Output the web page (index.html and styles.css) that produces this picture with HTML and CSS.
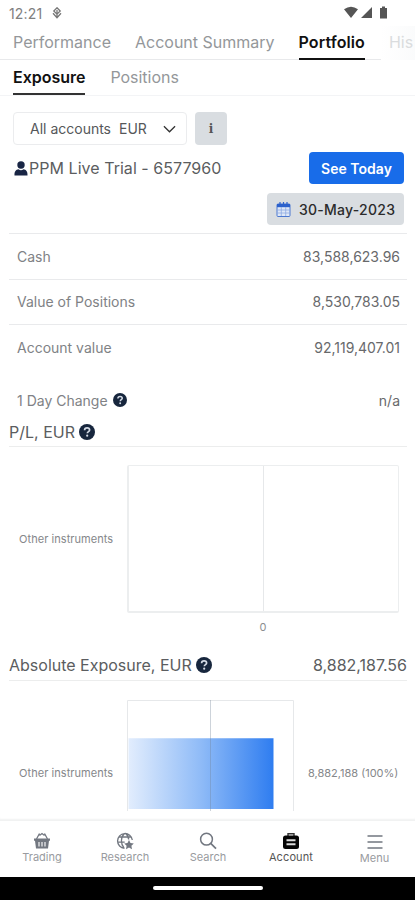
FILE: index.html
```html
<!DOCTYPE html>
<html lang="en">
<head>
<meta charset="utf-8">
<title>Portfolio exposure</title>
<link rel="stylesheet" href="styles.css">
</head>
<body>
<svg class="defs" aria-hidden="true">
  <symbol id="help" viewBox="0 0 16 16"><circle cx="8" cy="8" r="8" fill="#17263d"/><path d="M5.6 6.2C5.6 4.7 6.7 3.9 8.1 3.9s2.5.9 2.5 2.1c0 1.6-2.3 1.7-2.3 3.3" fill="none" stroke="#d5dce6" stroke-width="1.7"/><circle cx="8.2" cy="11.7" r="1.1" fill="#d5dce6"/></symbol>
</svg>
<div class="screen">
  <header class="status">
    <span class="clock">12:21</span>
    <svg class="usb" viewBox="0 0 10 12"><path d="M5 .8 8.2 4 5 7.2 1.8 4zM5 3v8M1 6.2 5 10.8 9 6.2" fill="none" stroke="#777" stroke-width="1.3"/></svg>
    <svg class="signals" viewBox="0 0 44 14"><path d="M0 3.2Q7-1.800 14 3.2L7 12zM17 12 28 1v11z" fill="#555"/><path d="M36 2h2V.5h3V2h2v10.500h-7z" fill="#555"/></svg>
  </header>
  <nav class="tabs primary">
    <a class="t-performance">Performance</a><a class="t-summary">Account Summary</a><a class="t-portfolio active">Portfolio</a><a class="t-history">His</a>
  </nav>
  <nav class="tabs secondary">
    <a class="t-exposure active">Exposure</a><a class="t-positions">Positions</a>
  </nav>
  <main class="content">
    <div class="filters">
      <div class="select"><span class="select-name">All accounts</span><span class="select-currency">EUR</span><svg class="chevron" viewBox="0 0 14 8"><path d="M1 1l6 6 6-6" fill="none" stroke="#333" stroke-width="1.4"/></svg></div>
      <button class="info">i</button>
    </div>
    <div class="account">
      <svg class="person" viewBox="0 0 14 15"><circle cx="7" cy="4" r="3.7" fill="#182544"/><path d="M.5 14.500c-.2-4 1.500-6 4-6.200Q7 10 9.500 8.300c2.500.2 4.200 2.200 4 6.200z" fill="#182544"/></svg>
      <span class="account-name">PPM Live Trial - 6577960</span>
      <button class="today">See Today</button>
    </div>
    <div class="date-row"><button class="date"><svg class="calendar" viewBox="0 0 15 15"><rect x="1" y="2" width="13" height="12.5" rx="1" fill="#dfe8f7" stroke="#4c78d0"/><path d="M1 2h13v3.200H1z" fill="#2c61cc"/><path d="M4 0v3M7.500 0v3M11 0v3" stroke="#2c61cc" stroke-width="1.2"/><path d="M5.300 5v9M9.700 5v9M1 8h13M1 11h13" stroke="#8daae2" stroke-width=".8"/></svg><span class="date-text">30-May-2023</span></button></div>
    <div class="row"><span class="l-cash">Cash</span><span class="v-cash">83,588,623.96</span></div>
    <div class="row"><span class="l-value">Value of Positions</span><span class="v-value">8,530,783.05</span></div>
    <div class="row last"><span class="l-account">Account value</span><span class="v-account">92,119,407.01</span></div>
    <div class="row change"><span class="l-change">1 Day Change</span><svg class="help-small"><use href="#help"/></svg><span class="v-change">n/a</span></div>
    <div class="section pl"><span class="h-pl">P/L, EUR</span><svg class="help"><use href="#help"/></svg></div>
    <div class="chart first">
      <span class="chart-label">Other instruments</span>
      <div class="plot"><i></i><i></i></div>
    </div>
    <div class="axis"><span>0</span></div>
    <div class="section exposure"><span class="h-exposure">Absolute Exposure, EUR</span><svg class="help"><use href="#help"/></svg><span class="v-exposure">8,882,187.56</span></div>
    <div class="chart second">
      <span class="chart-label">Other instruments</span>
      <svg class="bars" viewBox="0 0 167 111"><defs><linearGradient id="fade"><stop stop-color="#e2edfd"/><stop offset=".5" stop-color="#8fbbf7"/><stop offset="1" stop-color="#2f7df0"/></linearGradient></defs><path d="M.5 111V.5h166V111" fill="none" stroke="#e6e8ea"/><path d="M1.500 38.300h145v70.700H1.500z" fill="url(#fade)"/><path d="M83.500 0v111" stroke="#708095" stroke-opacity=".35"/></svg>
      <span class="chart-value">8,882,188 (100%)</span>
    </div>
  </main>
  <nav class="bottom">
    <a><svg viewBox="0 0 18 18"><path d="M1 6.500h16v2.300h-1L15 16.500H3L2 8.800H1z" fill="#727780"/><path d="M3.500 7 6.500 1.500M14.500 7l-3-5.500M6.500 3.500 9 1.500l2.500 2" fill="none" stroke="#727780" stroke-width="1.3"/><path d="M6 10v4.500M9 10v4.500M12 10v4.500" stroke="#fff" stroke-width="1.1"/></svg><span class="n-trading">Trading</span></a>
    <a><svg viewBox="0 0 18 18"><path d="M8.500 16.300A7.400 7.400 0 1 1 16.300 8M8.500 1.500C4.500 5 4.500 12 8 16M9.500 1.500C11.500 3 12.600 5 12.700 7.500M2.500 5h13M1.700 10.200h7" fill="none" stroke="#727780" stroke-width="1.3"/><path d="m13 8 1.500 3.100 3.300.4-2.400 2.300.6 3.500-3-1.700-3 1.700.6-3.500-2.400-2.300 3.300-.4z" fill="#727780"/></svg><span class="n-research">Research</span></a>
    <a><svg viewBox="0 0 18 18"><circle cx="7.500" cy="7.200" r="5.900" fill="none" stroke="#727780" stroke-width="1.5"/><path d="m11.700 11.400 5.300 5.300" stroke="#727780" stroke-width="1.7"/></svg><span class="n-search">Search</span></a>
    <a class="current"><svg viewBox="0 0 18 18"><path d="M6 4V1.700h6V4" fill="none" stroke="#333" stroke-width="1.4"/><rect x="1" y="3.500" width="16" height="13.500" rx="2.500" fill="#050505"/><path d="M4.500 8.200h9M4.500 12.200h9" stroke="#ddd" stroke-width="2"/></svg><span class="n-account">Account</span></a>
    <a class="menu"><svg viewBox="0 0 18 18"><path d="M1.500 3h15M1.500 9h15M1.500 15h15" stroke="#727780" stroke-width="1.7"/></svg><span class="n-menu">Menu</span></a>
  </nav>
  <footer class="gesture"><div class="handle"></div></footer>
</div>
</body>
</html>
```
FILE: styles.css
```css
* { box-sizing: border-box; }
body { margin: 0; background: #fff; font-family: Inter, "Liberation Sans", sans-serif; color: #555; }
button { border: 0; padding: 0; font-family: inherit; }
.defs { position: absolute; width: 0; height: 0; }
.screen { width: 415px; height: 900px; overflow: hidden; display: flex; flex-direction: column; }
.screen span, .tabs a { white-space: nowrap; }
.status { height: 26px; flex: none; display: flex; align-items: center; padding: 0 27px 0 9px; }
.clock { font-size: 14px; color: #808080; width: 35px; letter-spacing: .15px; }
.usb { width: 10px; height: 12px; margin-left: 8px; }
.signals { width: 44px; height: 14px; margin-left: auto; }
.tabs { display: flex; flex: none; padding-left: 13px; font-size: 16px; color: #94979a; }
.tabs a { height: 100%; flex: none; }
.primary { height: 34px; line-height: 33px; box-shadow: inset 0 -1px #e8e9eb; gap: 24px; }
.secondary { height: 36px; line-height: 35px; border-bottom: 1px solid #f3f4f6; gap: 25px; letter-spacing: -.02px; }
.tabs .active { color: #111; font-weight: 600; border-bottom: 2px solid #111; }
.primary .active { letter-spacing: .1px; }
.secondary .active { border-bottom-color: #333; }
.tabs .t-history { color: #dadcde; width: 50px; padding-left: 8px; margin-left: -8px; background: linear-gradient(90deg, #fff, #f8f9fa); }
.content { height: 725px; flex: none; padding: 16px 8px 0 9px; display: flex; flex-direction: column; box-shadow: inset 0 -3px 2px -1px #f1f2f2; }
.content > div { flex: none; }
.filters { display: flex; gap: 8px; padding-left: 4px; }
.select { width: 174px; height: 33px; border: 1px solid #ebecee; border-radius: 4px; display: flex; align-items: center; padding: 0 10px 0 16px; font-size: 14px; color: #55575a; }
.select-currency { margin-left: 8px; }
.chevron { width: 13px; height: 8px; margin-left: auto; }
.info { width: 32px; height: 33px; border-radius: 4px; background: #d9dde1; font: 600 12px "DejaVu Serif", serif; color: #555; }
.account { height: 32px; margin-top: 7px; display: flex; align-items: center; padding: 0 3px 0 5px; }
.person { width: 14px; height: 15px; margin-right: 1px; }
.account-name { font-size: 16px; color: #5b5d60; letter-spacing: .04px; }
.today { width: 95px; height: 32px; margin-left: auto; border-radius: 4px; background: #186ce9; color: #fff; font-weight: 600; font-size: 14px; letter-spacing: .04px; }
.date-row { height: 50px; padding: 9px 3px 0 0; display: flex; justify-content: flex-end; border-bottom: 1px solid #e9eaec; }
.date { width: 137px; height: 32px; background: #d9dde1; border-radius: 4px; display: flex; align-items: center; padding-left: 9px; color: #2b2b2b; font-size: 14px; font-weight: 500; letter-spacing: .25px; }
.calendar { width: 15px; height: 15px; margin-right: 8px; }
.row { height: 45.5px; border-bottom: 1px solid #e9eaec; display: flex; align-items: center; justify-content: space-between; padding: 0 7px 0 8px; font-size: 14px; color: #808285; }
.row > span:last-child { color: #68696b; }
.row.last { border-color: transparent; }
.row.change { height: 25px; margin-top: 17px; border: 0; justify-content: flex-start; }
.help-small { width: 14px; height: 14px; margin-left: 5px; }
.row.change .v-change { margin-left: auto; }
.section { display: flex; align-items: center; height: 29px; font-size: 16px; color: #5b5d60; border-bottom: 1px solid #eceded; }
.pl { height: 34px; padding-top: 5px; }
.help { width: 16px; height: 16px; margin-left: 4px; }
.chart { display: flex; font-size: 11px; color: #85878a; padding-left: 10px; }
.chart-label { width: 95px; letter-spacing: .06px; }
.first { height: 148px; margin-top: 18px; align-items: center; }
.plot { width: 272px; height: 148px; margin-left: 13px; border: 2px solid #eceeef; border-top-width: 1px; border-right-width: 1px; border-radius: 2px; display: grid; grid-template-columns: 134px 1fr; }
.plot i + i { border-left: 1px solid #e6e8ea; }
.axis { height: 28px; width: 270px; margin-left: 119px; text-align: center; font-size: 11px; color: #8c8e90; line-height: 28px; }
.exposure { height: 31px; margin-top: 9px; padding-top: 1px; }
.v-exposure { margin-left: auto; }
.second { margin-top: 19px; height: 111px; align-items: center; }
.bars { width: 167px; height: 111px; margin-left: 13px; }
.second .chart-label, .chart-value { padding-top: 36px; }
.chart-value { margin-left: 14px; }
.bottom { height: 56px; flex: none; padding-top: 11px; display: grid; grid-template-columns: repeat(5, 83px); }
.bottom a { display: flex; flex-direction: column; align-items: center; font-size: 11px; line-height: 15px; color: #999ba0; }
.bottom svg { width: 18px; height: 18px; margin-left: 1px; }
.bottom .menu svg { margin-top: 1px; margin-left: 2px; }
.bottom span { margin-left: 1px; }
.bottom .menu span { margin-left: 2px; }
.bottom .current { color: #555; }
.n-account { letter-spacing: .12px; }
.gesture { height: 23px; flex: none; background: #000; padding-top: 9px; }
.handle { width: 110px; height: 4px; margin: 0 auto; border-radius: 2px; background: #fff; }
```
